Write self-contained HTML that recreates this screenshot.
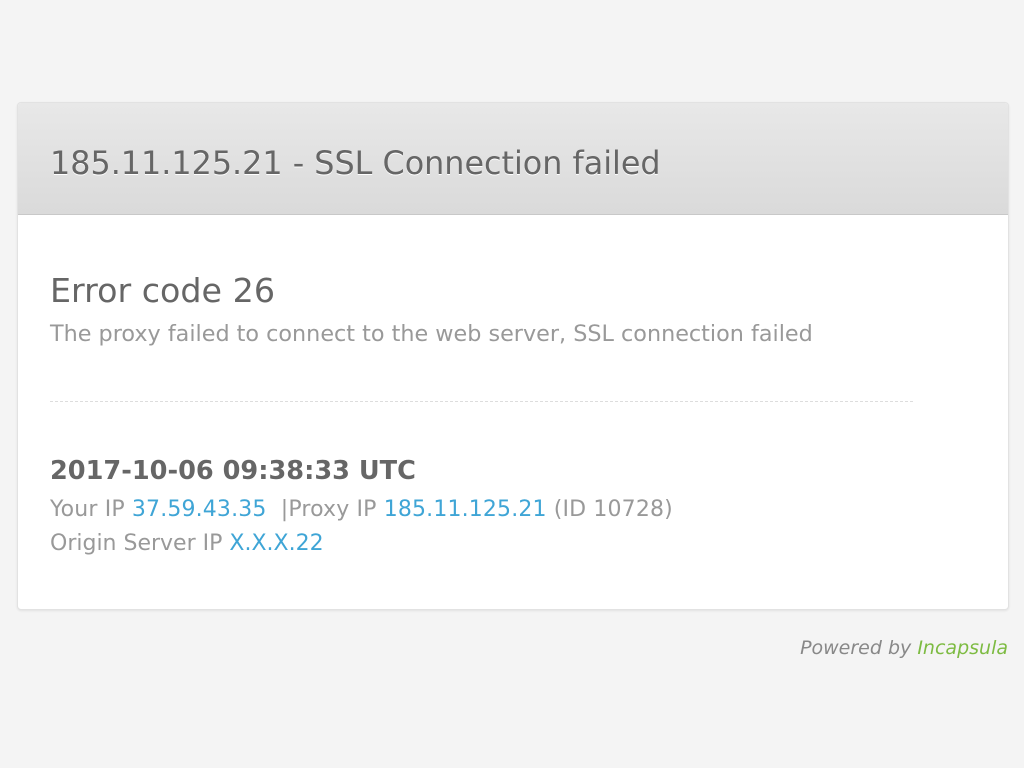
<!DOCTYPE html>
<html><head><style>
html,body{margin:0;padding:0;background:#f4f4f4;width:1024px;height:768px;overflow:hidden;font-family:"DejaVu Sans","Liberation Sans",sans-serif;}
.card{position:absolute;left:17px;top:102px;width:990px;height:506px;background:#fff;border:1px solid #e2e2e2;border-radius:4px;box-shadow:0 1px 2px rgba(0,0,0,.08);overflow:hidden;}
.hd{height:111px;border-bottom:1px solid #c8c8c8;background:linear-gradient(#e8e8e8,#dadada);position:relative;}
.hd h1{position:absolute;left:32px;top:42px;margin:0;font-weight:normal;font-size:31.8px;color:#666;white-space:nowrap;text-shadow:0 1px 0 #fff;}
.t{position:absolute;white-space:nowrap;}
.ec{left:32px;top:168px;font-size:33.3px;color:#666;}
.sub{left:32px;top:218px;font-size:22.3px;color:#999;}
.dash{position:absolute;left:32px;top:298px;width:863px;border-top:1px dashed #ddd;}
.ts{left:32px;top:353px;font-size:25.6px;font-weight:bold;color:#666;}
.l{font-size:22px;color:#999;left:32px;}
a{color:#3fa5d6;text-decoration:none;}
.pw{position:absolute;right:16px;top:637px;font-size:19px;font-style:italic;color:#888;white-space:nowrap;}
.pw span{color:#7dbb42;}
</style></head><body>
<div class="card">
<div class="hd"><h1>185.11.125.21 - SSL Connection failed</h1></div>
<div class="t ec">Error code 26</div>
<div class="t sub">The proxy failed to connect to the web server, SSL connection failed</div>
<div class="dash"></div>
<div class="t ts">2017-10-06 09:38:33 UTC</div>
<div class="t l" style="top:394px;letter-spacing:0.15px">Your IP <a>37.59.43.35</a>&nbsp; |Proxy IP <a>185.11.125.21</a> (ID 10728)</div>
<div class="t l" style="top:428px">Origin Server IP <a>X.X.X.22</a></div>
</div>
<div class="pw">Powered by <span>Incapsula</span></div>
</body></html>
